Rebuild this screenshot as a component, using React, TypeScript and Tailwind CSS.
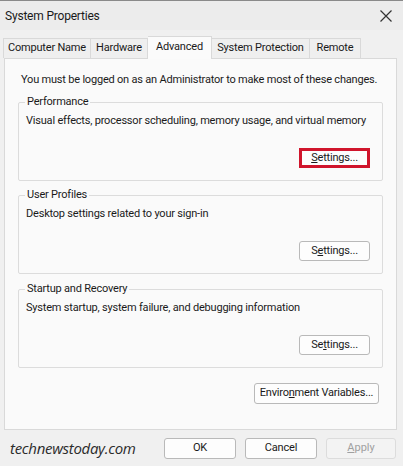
import React from "react";

const font = { fontFamily: 'Roboto, "Noto Sans", sans-serif' };
const t = "text-[11px] tracking-[-0.2px] text-[#1a1a1a] whitespace-nowrap";

function Btn({ children, className = "" }: { children: React.ReactNode; className?: string }) {
  return (
    <div
      className={`h-[20px] flex items-center justify-center border border-[#b9b9b9] rounded-[3px] bg-[#fdfdfd] ${t} ${className}`}
    >
      {children}
    </div>
  );
}

function Group({
  title,
  text,
  highlight,
  label,
}: {
  title: string;
  text: string;
  highlight?: boolean;
  label: React.ReactNode;
}) {
  return (
    <div className="relative mx-[13px] border border-[#dcdcdc] rounded-[2px] h-[79px]">
      <div className={`absolute left-[6px] top-[-10px] px-[2px] bg-[#fafafa] leading-[18px] ${t}`}>{title}</div>
      <div className={`pl-[7px] pt-[9px] leading-[18px] ${t}`}>{text}</div>
      <div className="flex justify-end pr-[12px] mt-[18px]">
        {highlight ? (
          <div className="border-[3px] border-[#d0152c]">
            <div className={`w-[65px] h-[14px] flex items-center justify-center bg-[#fdfdfd] ${t}`}>{label}</div>
          </div>
        ) : (
          <Btn className="w-[71px]">{label}</Btn>
        )}
      </div>
    </div>
  );
}

export default function App() {
  return (
    <div className="w-[403px] h-[466px] bg-[#f0f0f0] overflow-hidden relative" style={font}>
      <div className="h-[1px] bg-[#8a8a8a]" />
      {/* title bar */}
      <div className="h-[29px] bg-[#ececec] flex items-center justify-between pl-[5px] pr-[10px]">
        <span className="text-[12px] tracking-[-0.2px] text-[#1a1a1a]">System Properties</span>
        <svg width="14" height="14" viewBox="0 0 14 14">
          <path d="M1.5 1.5 L12.5 12.5 M12.5 1.5 L1.5 12.5" stroke="#333" strokeWidth="1.2" />
        </svg>
      </div>
      {/* tabs */}
      <div className="h-[5px]" />
      <div className="flex items-end pl-[3px] h-[23px]">
        <div className={`h-[20px] w-[88px] flex items-center justify-center border border-b-0 border-[#d9d9d9] bg-[#efefef] ${t}`}>
          Computer Name
        </div>
        <div className={`h-[20px] w-[57px] flex items-center justify-center border border-l-0 border-b-0 border-[#d9d9d9] bg-[#efefef] ${t}`}>
          Hardware
        </div>
        <div className={`h-[23px] w-[64px] flex items-start pt-[2px] justify-center border border-l-0 border-b-0 border-[#d9d9d9] bg-[#fbfbfb] relative z-10 mb-[-1px] ${t}`}>
          Advanced
        </div>
        <div className={`h-[20px] w-[98px] flex items-center justify-center border border-l-0 border-b-0 border-[#d9d9d9] bg-[#efefef] ${t}`}>
          System Protection
        </div>
        <div className={`h-[20px] w-[51px] flex items-center justify-center border border-l-0 border-b-0 border-[#d9d9d9] bg-[#efefef] ${t}`}>
          Remote
        </div>
      </div>
      {/* panel */}
      <div className="ml-[4px] mr-[6px] h-[372px] border border-[#d9d9d9] bg-[#fafafa] flex flex-col">
        <div className={`pl-[16px] pt-[12px] leading-[18px] ${t}`}>
          You must be logged on as an Administrator to make most of these changes.
        </div>
        <div className="h-[13px]" />
        <Group
          title="Performance"
          text="Visual effects, processor scheduling, memory usage, and virtual memory"
          highlight
          label={
            <span>
              <span className="underline">S</span>ettings...
            </span>
          }
        />
        <div className="h-[14px]" />
        <Group
          title="User Profiles"
          text="Desktop settings related to your sign-in"
          label={
            <span>
              S<span className="underline">e</span>ttings...
            </span>
          }
        />
        <div className="h-[15px]" />
        <Group
          title="Startup and Recovery"
          text="System startup, system failure, and debugging information"
          label={
            <span>
              Se<span className="underline">t</span>tings...
            </span>
          }
        />
        <div className="flex justify-end pr-[17px] mt-[15px]">
          <Btn className="w-[125px] h-[21px]">
            <span>
              Enviro<span className="underline">n</span>ment Variables...
            </span>
          </Btn>
        </div>
      </div>
      {/* footer */}
      <div className="flex items-center h-[36px] pl-[10px]">
        <span
          className="italic text-[15px] text-[#2b2b2b] w-[150px] tracking-[-0.3px] whitespace-nowrap"
          style={{ fontFamily: '"Open Sans", "Noto Sans", sans-serif' }}
        >
          technewstoday.com
        </span>
        <div className="flex gap-[9px] ml-[4px]">
          <Btn className="w-[72px] h-[21px]">OK</Btn>
          <Btn className="w-[72px] h-[21px]">Cancel</Btn>
          <div className="w-[70px] h-[21px] flex items-center justify-center border border-[#dcdcdc] rounded-[3px] bg-[#f3f3f3] text-[11px] text-[#a0a0a0]">
            <span>
              <span className="underline">A</span>pply
            </span>
          </div>
        </div>
      </div>
    </div>
  );
}
